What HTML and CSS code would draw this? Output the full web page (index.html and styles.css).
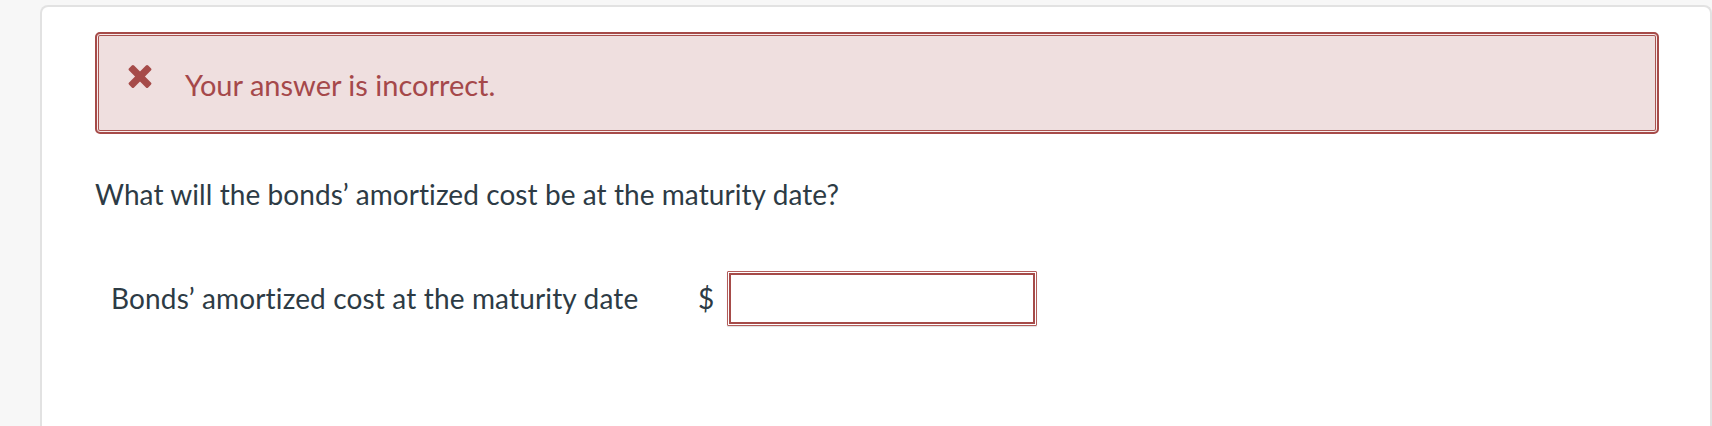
FILE: index.html
```html
<!DOCTYPE html>
<html lang="en">
<head>
<meta charset="utf-8">
<title>Question feedback</title>
<link rel="stylesheet" href="styles.css">
</head>
<body>
<div class="card">
  <div class="alert">
    <svg class="alert-icon" viewBox="0 0 24 24" width="24" height="24" aria-hidden="true">
      <rect x="-1.5" y="8.5" width="27" height="7" rx="1.6" transform="rotate(45 12 12)"/>
      <rect x="-1.5" y="8.5" width="27" height="7" rx="1.6" transform="rotate(-45 12 12)"/>
    </svg>
    <span class="alert-text">Your answer is incorrect.</span>
  </div>
  <p class="question">What will the bonds’ amortized cost be at the maturity date?</p>
  <div class="answer-row">
    <span class="answer-label">Bonds’ amortized cost at the maturity date</span>
    <span class="currency">$</span>
    <input class="answer-input" type="text" aria-label="Bonds’ amortized cost at the maturity date">
  </div>
</div>
</body>
</html>
```

FILE: styles.css
```css
html, body {
  margin: 0;
  padding: 0;
  height: 100%;
}
body {
  background: #f7f7f7;
  font-family: Lato, "Open Sans", "Liberation Sans", sans-serif;
  overflow: hidden;
}
.card {
  margin: 5px 0 0 40px;
  height: calc(100vh - 5px);
  background: #ffffff;
  border: 2px solid #e2e2e2;
  border-bottom: 0;
  border-radius: 8px 8px 0 0;
  padding: 25px 51px 0 53px;
  box-sizing: border-box;
}
.alert {
  display: flex;
  align-items: flex-start;
  height: 102px;
  box-sizing: border-box;
  background: #efdfdf;
  border: 2px solid #a64b49;
  border-radius: 5px;
  box-shadow: inset 0 0 0 1px #f7ecec, inset 0 0 0 2px #a9524f;
  padding: 30px 0 0 31px;
}
.alert-icon {
  fill: #a64b49;
  flex: none;
  width: 24px;
  height: 25px;
  margin-right: 33px;
}
.alert-text {
  color: #a5484a;
  font-size: 29px;
  line-height: 40px;
  margin-top: 1px;
}
.question {
  margin: 41px 0 0 0;
  color: #2d3b45;
  font-size: 28px;
  line-height: 39px;
  letter-spacing: 0.07px;
}
.answer-row {
  display: flex;
  align-items: center;
  margin-top: 57px;
  padding-left: 16px;
}
.answer-label {
  width: 587px;
  flex: none;
  color: #2d3b45;
  font-size: 28px;
  line-height: 39px;
  letter-spacing: 0.15px;
}
.currency {
  width: 29px;
  flex: none;
  color: #2d3b45;
  font-size: 28px;
  line-height: 39px;
}
.answer-input {
  width: 310px;
  height: 55px;
  box-sizing: border-box;
  margin: 0;
  border: 1px solid #b35d5b;
  border-radius: 1px;
  background: #ffffff;
  box-shadow: inset 0 0 0 1px #ffffff, inset 0 0 0 3px #a64b49, 0 1px 1px rgba(0,0,0,0.12);
  outline: none;
  font-family: inherit;
  font-size: 26px;
}
```
